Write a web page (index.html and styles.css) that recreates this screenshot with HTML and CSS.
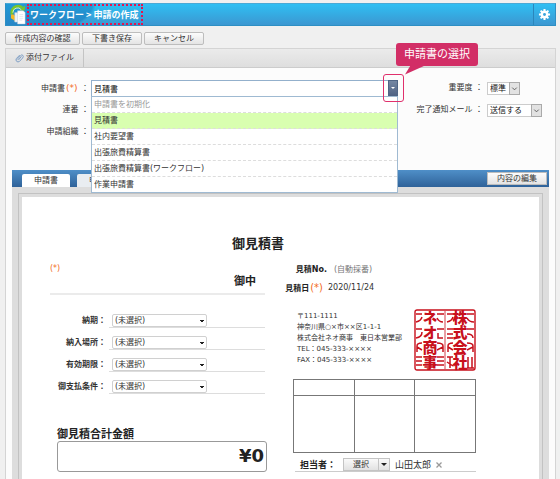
FILE: index.html
```html
<!DOCTYPE html>
<html lang="ja">
<head>
<meta charset="utf-8">
<title>ワークフロー &gt; 申請の作成</title>
<link rel="stylesheet" href="styles.css">
</head>
<body>
<header class="app-bar">
  <svg class="app-icon" viewBox="0 0 18 22" aria-hidden="true">
    <path d="M2 11V8a6.500 6.500 0 0 1 11-4" fill="none" stroke="#79c52c" stroke-width="3"/>
    <path d="M10 6.500l5.500.5.500-5.500z" fill="#79c52c"/>
    <path d="M3 9a5 5 0 0 1 9-3" fill="none" stroke="#e2f6c5" stroke-width="1"/>
    <path d="M1 11v4l6 4v-4l-3-4z" fill="#f5b927"/>
    <path d="M5 9h6v10H5z" fill="#f0f4f7" stroke="#b8cad8" stroke-width=".5"/>
    <path d="M8 7h6l2 2v12H8z" fill="#fff" stroke="#b8cad8" stroke-width=".5"/>
    <path d="M10 11h4M10 13h4M10 15h4M10 17h3" stroke="#dbe3ea" stroke-width=".8"/>
  </svg>
  <h1 class="app-title">ワークフロー &gt; 申請の作成</h1>
  <button class="gear" type="button" aria-label="設定">
    <svg viewBox="0 0 14 14" aria-hidden="true">
      <path d="M7 1v12M1 7h12M2.800 2.800l8.400 8.400M11.200 2.800l-8.400 8.400" stroke="#fff" stroke-width="2.200"/>
      <circle cx="7" cy="7" r="4.200" fill="#fff"/>
      <circle cx="7" cy="7" r="1.600" fill="#3ba4dc"/>
    </svg>
  </button>
</header>

<div class="actions">
  <button class="btn wide" type="button">作成内容の確認</button>
  <button class="btn" type="button">下書き保存</button>
  <button class="btn" type="button">キャンセル</button>
</div>

<main class="panel">
  <div class="attach-bar">
    <button class="attach" type="button">
      <svg viewBox="0 0 10 10" aria-hidden="true"><path d="M2.500 6.500L6 2.500Q7.500.8 8.700 2t-.2 3L5 8.800Q3.200 10 1.800 8.700T1.600 5.500L5 2M4 7l3-3.500" fill="none" stroke="#7f9fc4" stroke-width="1.100" stroke-linecap="round"/></svg>
      添付ファイル
    </button>
    <div class="callout">申請書の選択
      <svg class="callout-tail" viewBox="0 0 22 10" aria-hidden="true"><path d="M6 0h16L0 10z" fill="#d22e66"/></svg>
    </div>
  </div>

  <div class="form">
    <div class="form-main">
      <div class="row">
        <label class="label" for="doc">申請書<span class="req">(*)</span> ：</label>
        <div class="combo">
          <input id="doc" class="combo-input" type="text" value="見積書" role="combobox" aria-expanded="true" aria-controls="doc-list">
          <button class="combo-btn" type="button" aria-label="一覧を開く"></button>
          <span class="ring"></span>
          <ul id="doc-list" class="combo-list" role="listbox">
            <li class="muted" role="option">申請書を初期化</li>
            <li class="selected" role="option" aria-selected="true">見積書</li>
            <li role="option">社内要望書</li>
            <li role="option">出張旅費精算書</li>
            <li role="option">出張旅費精算書(ワークフロー)</li>
            <li role="option">作業申請書</li>
          </ul>
        </div>
      </div>
      <div class="row"><span class="label">連番 ：</span></div>
      <div class="row"><span class="label">申請組織 ：</span></div>
    </div>
    <div class="form-side">
      <div class="row">
        <label class="label" for="prio">重要度 ：</label>
        <span class="native short"><select id="prio"><option>標準</option></select><svg viewBox="0 0 10 12" aria-hidden="true"><path d="M2.500 5L5 7.500 7.500 5" fill="none" stroke="#555"/></svg></span>
      </div>
      <div class="row">
        <label class="label" for="mail">完了通知メール ：</label>
        <span class="native"><select id="mail"><option>送信する</option></select><svg viewBox="0 0 10 12" aria-hidden="true"><path d="M2.500 5L5 7.500 7.500 5" fill="none" stroke="#555"/></svg></span>
      </div>
    </div>
  </div>

  <section class="document">
    <div class="tabs">
      <button class="tab active" type="button">申請書</button>
      <button class="tab" type="button">申請者</button>
      <button class="btn edit" type="button">内容の編集</button>
    </div>
    <div class="frame">
      <div class="sheet">
        <h2 class="sheet-title">御見積書</h2>
        <div class="columns">
          <div class="left">
            <div class="client">
              <span class="req">(*)</span>
              <strong>御中</strong>
            </div>
            <div class="terms">
              <label for="t1">納期：</label>
              <div class="term"><select id="t1"><option>(未選択)</option></select></div>
              <label for="t2">納入場所：</label>
              <div class="term"><select id="t2"><option>(未選択)</option></select></div>
              <label for="t3">有効期限：</label>
              <div class="term"><select id="t3"><option>(未選択)</option></select></div>
              <label for="t4">御支払条件：</label>
              <div class="term"><select id="t4"><option>(未選択)</option></select></div>
            </div>
            <h3 class="total-title">御見積合計金額</h3>
            <div class="total">¥0</div>
          </div>
          <div class="right">
            <dl class="meta">
              <dt>見積No.</dt><dd class="auto">(自動採番)</dd>
              <dt>見積日<span class="req">(*)</span></dt><dd>2020/11/24</dd>
            </dl>
            <div class="company">
              <address>〒111-1111<br>神奈川県○×市××区1-1-1<br>株式会社ネオ商事　東日本営業部<br>TEL：045-333-××××<br>FAX：045-333-××××</address>
              <svg class="seal" viewBox="0 0 62 62" role="img" aria-label="株式会社ネオ商事">
                <rect x="1" y="1" width="60" height="60" rx="2" fill="#fff" stroke="#c8101c" stroke-width="1.400"/>
                <path d="M31 2v58" stroke="#c8101c" stroke-width=".8"/>
                <g fill="none" stroke="#c8101c" stroke-width="1.500">
                  <path d="M2 5h6M2 13q5-1 6-5M23 5h7M23 9q2 4 6 4M2 20h6M2 29q6-1 6-6M23 20h7M24 24v5h5M3 43v-6q0-3 5-3M3 38l5 3M29 43v-6q0-3-6-3M29 38l-6 3M2 48h6M2 52h6M2 56h6M23 48h7M23 52h7M23 56h7"/>
                  <path d="M33 5h6M33 13q5-1 6-5M53 5h7M53 9q2 4 7 4M33 20h6M33 25h6M33 29h6M53 20h7M53 25q6 0 6 4M34 43v-6q0-3 5-3M34 38l5 3M59 43v-6q0-3-6-3M59 38l-6 3M33 48h6M36 48v11M33 53l6 4M54 48v11M58 48v11M53 59h7"/>
                </g>
                <g class="seal-text">
                  <text x="46" y="1">株式会社</text>
                  <text x="16" y="1">ネオ商事</text>
                </g>
              </svg>
            </div>
            <table class="stamps">
              <tr class="stamp-head"><td></td><td></td><td></td></tr>
              <tr class="stamp-body"><td></td><td></td><td></td></tr>
            </table>
            <div class="staff">
              <strong>担当者：</strong>
              <button class="pick" type="button"><span>選択</span><i></i></button>
              <span class="name">山田太郎</span>
              <button class="remove" type="button" aria-label="削除"><svg viewBox="0 0 6 6" aria-hidden="true"><path d="M.5.5l5 5M5.500.5l-5 5" stroke="#999" stroke-width="1.300"/></svg></button>
            </div>
          </div>
        </div>
      </div>
    </div>
  </section>
</main>
</body>
</html>
```
FILE: styles.css
```css
* { box-sizing: border-box; }

body {
  margin: 0;
  padding: 3px 4px 0 5px;
  min-height: 100vh;
  display: flex;
  flex-direction: column;
  background: #f0f0f0;
  color: #333;
  font: 8px/12px "DejaVu Sans", "Noto Sans CJK JP", sans-serif;
}

button, input, select {
  margin: 0;
  padding: 0;
  border: 0;
  border-radius: 0;
  background: none;
  color: inherit;
  font: inherit;
}

select { appearance: none; }
h1, h2, h3, ul, dl, dd { margin: 0; padding: 0; }
.req { color: #f26a1b; }

/* Application bar */
.app-bar {
  display: flex;
  align-items: center;
  height: 23px;
  padding-left: 4px;
  border: 1px solid #2d8fc4;
  border-top-color: #49a9d6;
  background:
    radial-gradient(ellipse 90px 34px at 0 0, #1478bd88 96%, transparent),
    linear-gradient(#2fbff3, #3c97d1);
}
.app-icon { width: 17px; height: 21px; }
.app-title {
  align-self: stretch;
  padding: 0 3px 0 1px;
  border: 2px dotted #e5124f;
  color: #fff;
  font-family: "Noto Sans CJK JP", sans-serif;
  font-size: 9px;
  line-height: 17px;
}
.gear {
  width: 22px;
  align-self: stretch;
  margin-left: auto;
  border-left: 1px solid #2b86bb;
  display: grid;
  place-items: center;
}
.gear svg { width: 13px; height: 13px; }

/* Buttons */
.actions { display: flex; gap: 2px; margin: 6px 0 3px; }
.btn {
  width: 60px;
  height: 13px;
  border: 1px solid #bdbdbd;
  border-radius: 2px;
  background: linear-gradient(#fcfcfc, #e4e4e4);
  line-height: 11px;
}
.btn.wide { width: 75px; }

/* Main panel */
.panel {
  flex: 1;
  display: flex;
  flex-direction: column;
  border: 1px solid #d4d4d4;
  border-bottom: 0;
  background: #fcfcfc;
}
.attach-bar {
  position: relative;
  height: 19px;
  border-bottom: 1px solid #ccc;
  background: linear-gradient(#ebebeb, #dedede);
}
.attach {
  display: flex;
  align-items: center;
  gap: 2px;
  height: 18px;
  padding: 0 9px;
  border-right: 1px solid #c4c4c4;
}
.attach svg { width: 9px; height: 10px; }
.callout {
  position: absolute;
  right: 77px;
  top: -6px;
  z-index: 4;
  width: 82px;
  border-radius: 3px;
  background: #d22e66;
  color: #fff;
  font-size: 11px;
  line-height: 23px;
  text-align: center;
}
.callout-tail {
  position: absolute;
  left: 9px;
  top: 22px;
  width: 20px;
  height: 10px;
}

/* Form */
.form { display: flex; padding: 9px 13px 27px 0; }
.form-main { flex: 1; }
.form-side { width: 144px; }
.row { display: flex; align-items: center; height: 22px; }
.label { width: 85px; padding-right: 2px; text-align: right; white-space: nowrap; }
.label .req { margin: 0 1px; font-size: 9px; }
.form-side .label { width: 89px; padding-right: 4px; }
.combo { position: relative; flex: 1; display: flex; }
.combo-input {
  flex: 1;
  min-width: 0;
  height: 17px;
  padding-left: 2px;
  border: 1px solid #93b0cc;
  border-right: 0;
  background: #fff;
  color: #111;
}
.combo-btn {
  width: 10px;
  height: 17px;
  border: 1px solid #4f6585;
  background: linear-gradient(#7587a3, #4f6283);
  display: grid;
  place-items: center;
}
.combo-btn::after {
  content: "";
  border: 2px solid transparent;
  border-top-color: #fff;
  border-bottom: 0;
}
.ring {
  position: absolute;
  right: -6px;
  top: -6px;
  z-index: 3;
  width: 21px;
  height: 28px;
  border: 1px solid #e0306c;
  border-radius: 3px;
  pointer-events: none;
}
.combo-list {
  position: absolute;
  left: 0;
  right: 0;
  top: 16px;
  z-index: 2;
  border: 1px solid #9fbad2;
  background: #fff;
  list-style: none;
}
.combo-list li {
  height: 16px;
  padding-left: 2px;
  border-bottom: 1px dashed #ddd;
  line-height: 15px;
}
.combo-list li:last-child { height: 15px; border-bottom: 0; }
.combo-list .muted { color: #999; }
.combo-list .selected { background: #d9ffb0; }

.native {
  display: flex;
  width: 55px;
  height: 13px;
  border: 1px solid #ccc;
  background: #fff;
}
.native.short { width: 33px; }
.native select { flex: 1; min-width: 0; padding-left: 2px; color: #111; line-height: 11px; }
.native svg { width: 11px; height: 13px; margin: -1px; border: 1px solid #aaa; background: #e2e2e2; }

/* Document area */
.document {
  flex: 1;
  display: flex;
  flex-direction: column;
  margin: 0 6px;
  background: #ddd;
}
.tabs {
  display: flex;
  align-items: flex-end;
  gap: 7px;
  height: 17px;
  padding: 0 2px 0 10px;
  background: linear-gradient(#4f8fc8, #2f6299);
}
.tab {
  height: 13px;
  width: 48px;
  border-radius: 2px 2px 0 0;
  background: #e9edf1;
  line-height: 13px;
}
.tab.active { background: #fff; }
.btn.edit { align-self: center; margin-left: auto; border-radius: 0; }
.frame {
  flex: 1;
  display: flex;
  margin: 6px 6px 0;
  padding: 3px 3px 0;
  border: 1px solid #c2c2c2;
  border-bottom: 0;
}
.sheet { flex: 1; padding: 37px 63px 0 28px; background: #fff; }
.sheet-title {
  padding-right: 10px;
  color: #222;
  font-size: 13px;
  line-height: 20px;
  text-align: center;
}
.columns { display: grid; grid-template-columns: 215fr 194fr; gap: 17px; }
.left, .right { min-width: 0; }
.client {
  display: flex;
  justify-content: space-between;
  height: 41px;
  padding: 9px 9px 0 0;
  border-bottom: 2px solid #ebebeb;
  line-height: 12px;
}
.client strong { padding-top: 13px; color: #222; font-size: 11px; }
.terms {
  display: grid;
  grid-template-columns: 59px 1fr;
  row-gap: 8px;
  margin-top: 19px;
}
.terms label { padding-right: 3px; text-align: right; font-weight: 700; line-height: 14px; white-space: nowrap; }
.term { height: 14px; padding-left: 3px; border-bottom: 1px solid #ddd; }
.term select {
  display: block;
  width: 95px;
  height: 13px;
  padding-left: 2px;
  border: 1px solid #d0d0d0;
  border-radius: 2px;
  background:
    linear-gradient(45deg, transparent 50%, #222 50%) 87px 5px / 2px 2px no-repeat,
    linear-gradient(315deg, transparent 50%, #222 50%) 89px 5px / 2px 2px no-repeat,
    #fff;
  line-height: 11px;
}
.total-title { margin: 34px 0 0 7px; color: #222; font-size: 11px; line-height: 13px; }
.total {
  height: 31px;
  margin: 0 -2px 0 7px;
  padding-right: 2px;
  border: 1px solid #999;
  border-radius: 3px;
  color: #222;
  font-size: 18px;
  font-weight: 700;
  line-height: 27px;
  text-align: right;
}
.meta {
  display: grid;
  grid-template-columns: 46px 1fr;
  grid-auto-rows: 18px;
  padding-top: 7px;
  line-height: 18px;
}
.meta dt { justify-self: end; padding-right: 1px; color: #222; font-weight: 700; white-space: nowrap; }
.meta .req { padding: 0 4px 0 1px; font-size: 10px; font-weight: 400; }
.meta .auto { padding-left: 6px; color: #777; }
.company { display: flex; justify-content: space-between; padding: 12px 0 0 15px; }
address {
  padding-top: 2px;
  font-size: 7px;
  font-style: normal;
  line-height: 11px;
  white-space: nowrap;
}
.seal { flex: none; width: 62px; height: 62px; overflow: visible; }
.seal-text {
  fill: #c8101c;
  font: 900 15px "Noto Sans CJK JP", sans-serif;
  writing-mode: vertical-rl;
}
.stamps {
  width: calc(100% - 11px);
  margin: 8px 0 0 11px;
  border-collapse: collapse;
  table-layout: fixed;
}
.stamps td { padding: 0; border: 1px solid #777; }
.stamp-head { height: 16px; }
.stamp-body { height: 57px; }
.staff {
  display: flex;
  align-items: center;
  height: 14px;
  margin: 5px 0 0 13px;
  padding-left: 5px;
  border-bottom: 1px solid #ccc;
  white-space: nowrap;
}
.staff strong { width: 43px; color: #222; font-size: 9px; }
.pick {
  display: flex;
  width: 47px;
  height: 13px;
  border: 1px solid #c4c4c4;
  background: linear-gradient(#fafafa, #e2e2e2);
  line-height: 11px;
}
.pick span { flex: 1; }
.pick i { width: 11px; border-left: 1px solid #c4c4c4; display: grid; place-items: center; height: 11px; }
.pick i::after { content: ""; border: 3px solid transparent; border-top-color: #222; border-bottom: 0; }
.name { margin: 0 5px; font-size: 9px; }
.remove { display: flex; }
.remove svg { width: 6px; height: 6px; }
```
